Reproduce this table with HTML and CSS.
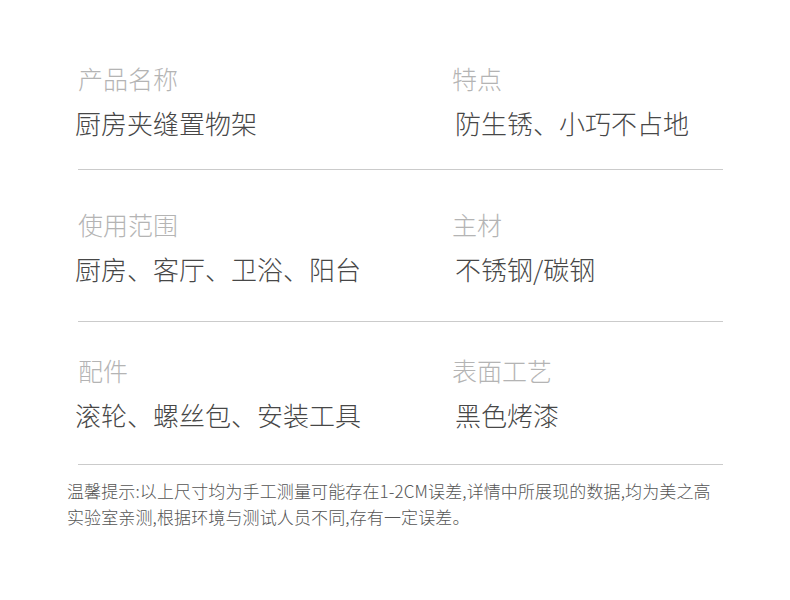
FILE: index.html
```html
<!DOCTYPE html>
<html lang="zh-CN">
<head>
<meta charset="utf-8">
<title>产品参数</title>
<link rel="stylesheet" href="styles.css">
</head>
<body>
<main class="page">
  <section class="spec">
    <div class="row row-1">
      <div class="cell">
        <div class="label">产品名称</div>
        <div class="value">厨房夹缝置物架</div>
      </div>
      <div class="cell cell-right">
        <div class="label">特点</div>
        <div class="value">防生锈、小巧不占地</div>
      </div>
    </div>
    <div class="row row-2">
      <div class="cell">
        <div class="label">使用范围</div>
        <div class="value">厨房、客厅、卫浴、阳台</div>
      </div>
      <div class="cell cell-right">
        <div class="label">主材</div>
        <div class="value">不锈钢/碳钢</div>
      </div>
    </div>
    <div class="row row-3">
      <div class="cell">
        <div class="label">配件</div>
        <div class="value">滚轮、螺丝包、安装工具</div>
      </div>
      <div class="cell cell-right">
        <div class="label">表面工艺</div>
        <div class="value">黑色烤漆</div>
      </div>
    </div>
  </section>
  <p class="note">温馨提示:以上尺寸均为手工测量可能存在1-2CM误差,详情中所展现的数据,均为美之高<br>实验室亲测,根据环境与测试人员不同,存有一定误差。</p>
</main>
</body>
</html>
```

FILE: styles.css
```css
html, body {
  margin: 0;
  padding: 0;
  background: #ffffff;
}

.page {
  width: 790px;
  height: 600px;
  box-sizing: border-box;
  padding-top: 63px;
  font-family: "Noto Sans CJK SC", "Noto Sans", sans-serif;
}

.spec {
  margin-left: 78px;
  width: 645px;
}

.row {
  display: grid;
  grid-template-columns: 375px 1fr;
  padding-bottom: 31px;
  border-bottom: 1px solid #cbcbcb;
  margin-bottom: 39px;
}

.row-2 {
  padding-bottom: 37px;
  margin-bottom: 33px;
}

.row-3 {
  padding-bottom: 34px;
  margin-bottom: 0;
}

.cell {
  display: flex;
  flex-direction: column;
  gap: 15px;
}

.label {
  font-size: 25px;
  line-height: 30px;
  color: #b4b4b4;
  font-weight: 300;
}

.value {
  font-size: 26px;
  line-height: 30px;
  color: #474747;
  font-weight: 300;
  margin-left: -3px;
}

.cell-right .label {
  margin-left: -1px;
}

.cell-right .value {
  margin-left: 2px;
}

.note {
  margin: 13px 0 0 67px;
  font-size: 17px;
  line-height: 26px;
  color: #555555;
  font-weight: 300;
  letter-spacing: 0.12px;
  white-space: nowrap;
}
```
